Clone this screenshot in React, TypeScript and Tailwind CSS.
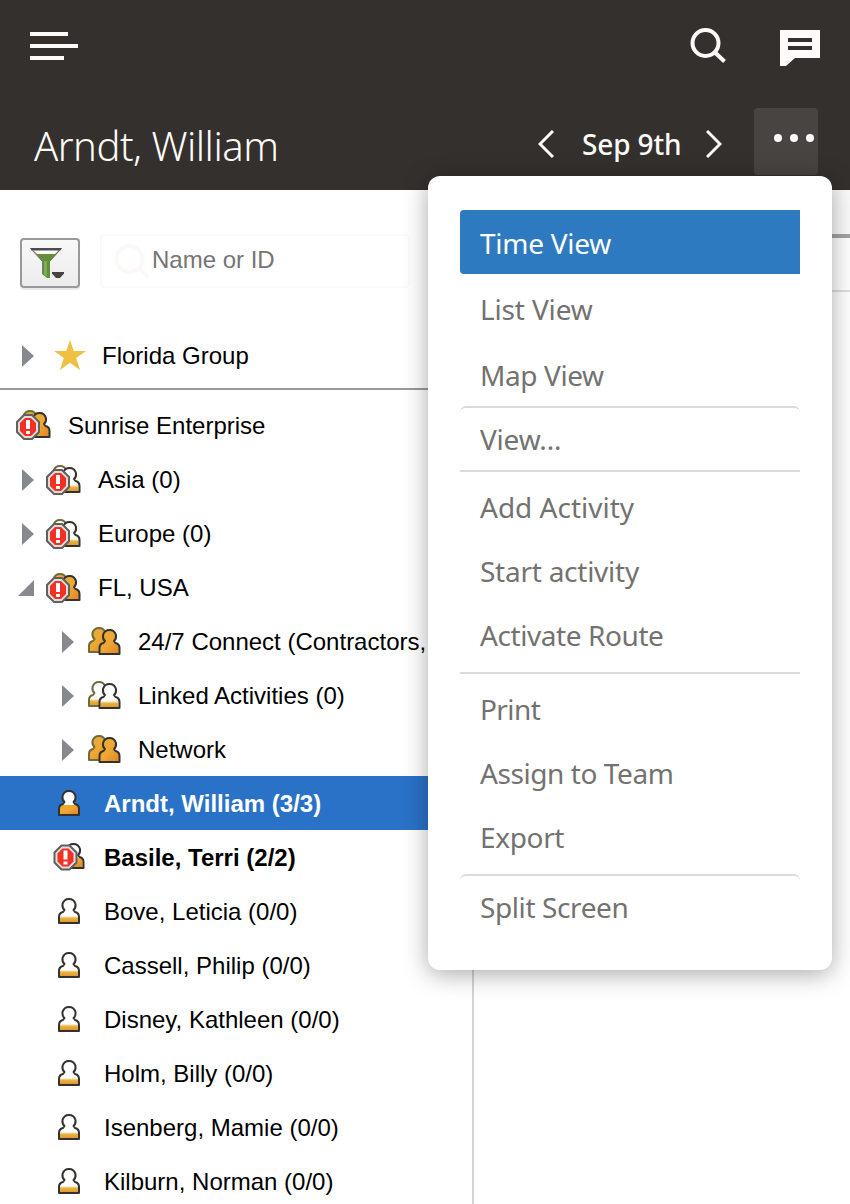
import { useState } from "react";
import clsx from "clsx";

type IconKind = "group" | "groupEmpty" | "alertGroup" | "alertGroupEmpty" | "personActive" | "person" | "alertPerson";

type TreeRow = {
    label: string;
    icon: IconKind;
    level: "root" | "region" | "team" | "person";
    arrow?: "closed" | "open";
    bold?: boolean;
};

const rows: TreeRow[] = [
    { label: "Sunrise Enterprise", icon: "alertGroup", level: "root" },
    { label: "Asia (0)", icon: "alertGroupEmpty", level: "region", arrow: "closed" },
    { label: "Europe (0)", icon: "alertGroupEmpty", level: "region", arrow: "closed" },
    { label: "FL, USA", icon: "alertGroup", level: "region", arrow: "open" },
    { label: "24/7 Connect (Contractors,", icon: "group", level: "team", arrow: "closed" },
    { label: "Linked Activities (0)", icon: "groupEmpty", level: "team", arrow: "closed" },
    { label: "Network", icon: "group", level: "team", arrow: "closed" },
    { label: "Arndt, William (3/3)", icon: "personActive", level: "person", bold: true },
    { label: "Basile, Terri (2/2)", icon: "alertPerson", level: "person", bold: true },
    { label: "Bove, Leticia (0/0)", icon: "person", level: "person" },
    { label: "Cassell, Philip (0/0)", icon: "person", level: "person" },
    { label: "Disney, Kathleen (0/0)", icon: "person", level: "person" },
    { label: "Holm, Billy (0/0)", icon: "person", level: "person" },
    { label: "Isenberg, Mamie (0/0)", icon: "person", level: "person" },
    { label: "Kilburn, Norman (0/0)", icon: "person", level: "person" }
];

// className carries the spacing and dividers between menu sections
const menuItems = [
    { label: "Time View", className: "h-16 pt-0.5 tracking-[-0.25px]" },
    { label: "List View", className: "mt-0.5 h-16 pt-0.5 tracking-[-0.15px]" },
    { label: "Map View", className: "mt-0.5 h-16 pt-0.5 tracking-[-0.4px]" },
    { label: "View...", className: "h-16 rounded-t-md border-t-2 border-[#dedadb] tracking-[-0.2px]" },
    { label: "Add Activity", className: "h-[68px] border-t-2 border-[#dedadb] pt-1" },
    { label: "Start activity", className: "h-16 pt-0.5 tracking-[-0.25px]" },
    { label: "Activate Route", className: "h-16 pt-0.5 tracking-[-0.42px]" },
    { label: "Print", className: "mt-1.5 h-[68px] border-t-2 border-[#dedadb] pt-1 tracking-[-0.6px]" },
    { label: "Assign to Team", className: "h-16 pt-0.5 tracking-[-0.42px]" },
    { label: "Export", className: "h-16 pt-0.5 tracking-[-0.35px]" },
    { label: "Split Screen", className: "mt-1.5 h-16 rounded-t-md border-t-2 border-[#dedadb] tracking-[-0.4px]" }
];

const personPath = "M6.5 12 Q4 10 4.5 6 Q6 1 11 1 Q16 1 17.5 6 Q18 10 15.5 12 L17 14 Q21 15 21 19 V25 H1 V19 Q1 15 5 14 Z";

function Person({ x, y, fill, stroke = "#33322e" }: { x: number; y: number; fill: "full" | "half" | "empty"; stroke?: string }) {
    return (
        <g transform={`translate(${x} ${y})`}>
            <path d={personPath} fill={fill === "full" ? "url(#amber)" : "#fff"} />
            {fill === "half" && <path d="M2 15 H20 V24 H2 Z" fill="url(#amber)" />}
            {fill === "empty" && <path d="M2 18 H20 V24 H2 Z" fill="url(#amberBase)" />}
            <path d={personPath} fill="none" stroke={stroke} strokeWidth="2" strokeLinejoin="round" />
        </g>
    );
}

function AlertBadge({ x, y }: { x: number; y: number }) {
    return (
        <g transform={`translate(${x} ${y})`}>
            <path d="M8 1 H16 L23 8 V18 L16 25 H8 L1 18 V8 Z" fill="#dededc" stroke="#62605e" strokeWidth="2" />
            <path d="M9 4 H15 L20 9 V17 L15 22 H9 L4 17 V9 Z" fill="#f23124" />
            <path d="M10 6 H14 V15 H10 Z M10 17 H14 V20 H10 Z" fill="#fff" />
        </g>
    );
}

function ResourceIcon({ kind }: { kind: IconKind }) {
    if (kind === "person" || kind === "personActive") {
        return (
            <svg width="22" height="27" viewBox="0 0 22 27">
                <Person x={0} y={0} fill={kind === "person" ? "empty" : "half"} />
            </svg>
        );
    }
    if (kind === "alertPerson") {
        return (
            <svg width="32" height="28" viewBox="0 0 32 28">
                <Person x={9.5} y={0} fill="half" />
                <AlertBadge x={0.5} y={1.5} />
            </svg>
        );
    }
    const fill = kind === "group" || kind === "alertGroup" ? "full" : "empty";
    if (kind === "group" || kind === "groupEmpty") {
        return (
            <svg width="33" height="28" viewBox="0 0 33 28">
                <Person x={0} y={0} fill={fill} stroke="#716a3c" />
                <Person x={10.5} y={2} fill={fill} />
            </svg>
        );
    }
    return (
        <svg width="36" height="30" viewBox="0 0 36 30">
            <Person x={3} y={0} fill={fill} stroke="#716a3c" />
            <Person x={12.5} y={2} fill={fill} />
            <AlertBadge x={0} y={4} />
        </svg>
    );
}

function Arrow({ open }: { open?: boolean }) {
    return (
        <svg className="mt-0.5" width="16" height="22" viewBox="0 0 16 22">
            <path d={open ? "M16 3 V19 H0 Z" : "M4 0 L16 11 L4 22 Z"} fill="#868a8f" />
        </svg>
    );
}

function TopBar() {
    return (
        <header className="h-[190px] shrink-0 bg-[#34302d] text-[#fcfbfa]">
            <div className="flex h-[95px] items-start pl-[30px] pr-[30px]">
                <button className="mt-8 flex flex-col gap-2" aria-label="Menu">
                    <span className="h-1 w-[38px] bg-[#fcfbfa]" />
                    <span className="h-1 w-12 bg-[#fcfbfa]" />
                    <span className="h-1 w-[34px] bg-[#fcfbfa]" />
                </button>
                <svg className="ml-auto mt-7" width="36" height="36" viewBox="0 0 36 36" fill="none" stroke="currentColor" strokeWidth="4">
                    <circle cx="15.5" cy="15" r="13" />
                    <path d="M24.5 24 L34.5 33.5" />
                </svg>
                <svg className="ml-[54px] mt-[30px]" width="40" height="36" viewBox="0 0 40 36">
                    <path d="M0 0 H40 V28 H15 L6 36 H0 Z" fill="currentColor" />
                    <path d="M8 8 H32 V12 H8 Z M8 16 H32 V20 H8 Z" fill="#34302d" />
                </svg>
            </div>
            <div className="flex h-[95px] items-start pl-[34px] pr-8">
                <h1 className="mt-[23px] w-[504px] whitespace-nowrap text-[40px] leading-[56px] font-light tracking-[-0.5px]">Arndt, William</h1>
                <svg className="mt-[35px]" width="16" height="28" viewBox="0 0 16 28" fill="none" stroke="currentColor" strokeWidth="3">
                    <path d="M15 1 L2 14 L15 27" />
                </svg>
                <span className="ml-7 mt-[29px] w-[100px] whitespace-nowrap text-[28px] leading-10 font-medium tracking-[-0.15px]">Sep 9th</span>
                <svg className="ml-6 mt-[35px]" width="16" height="28" viewBox="0 0 16 28" fill="none" stroke="currentColor" strokeWidth="3">
                    <path d="M1 1 L14 14 L1 27" />
                </svg>
                <button className="ml-auto mt-[13px] flex h-[67px] w-16 justify-end gap-2 rounded bg-[#484441] pr-1 pt-[26px]" aria-label="More">
                    <span className="size-2 rounded-full bg-[#fcfbfa]" />
                    <span className="size-2 rounded-full bg-[#fcfbfa]" />
                    <span className="size-2 rounded-full bg-[#fcfbfa]" />
                </button>
            </div>
        </header>
    );
}

function SearchRow() {
    return (
        <div className="flex h-[128px] items-start gap-5 pl-5 pt-11">
            <button className="mt-1 flex h-[50px] w-[60px] items-start rounded border-2 border-[#999] bg-linear-to-b from-[#f8f8f8] to-[#ececec] pl-2 pt-2 shadow-[0_2px_1px_#e8e8e8]" aria-label="Filter">
                <svg width="36" height="32" viewBox="0 0 36 32">
                    <path d="M2 2 H30 L20 13 V30 H17 L12 26 V13 Z" fill="#648e3c" />
                    <path d="M3 2 H29 L25 6 H7 Z" fill="#fff" />
                    <path d="M0 0 H32 L30.5 2.5 H1.5 Z" fill="#4c4d4b" />
                    <path d="M2 2 L12.5 13.5 V26" fill="none" stroke="#777" strokeWidth="1" />
                    <path d="M14 13 H17 V29 L14 26.5 Z" fill="#7fae51" />
                    <path d="M30 2 L20 13" stroke="#66753d" strokeWidth="1" />
                    <path d="M22 24 H34 V25.5 L30 30 H26 L22 25.5 Z" fill="#444" />
                </svg>
            </button>
            <div className="flex h-[54px] w-[310px] items-start rounded border-2 border-[#fafafa] pl-3">
                <svg className="mt-2" width="36" height="36" viewBox="0 0 36 36" fill="none" stroke="#fbf9f8" strokeWidth="4">
                    <circle cx="15.5" cy="15" r="13" />
                    <path d="M24.5 24 L34.5 34" />
                </svg>
                <span className="ml-0.5 mt-2 text-2xl text-[#757575]">Name or ID</span>
            </div>
        </div>
    );
}

export default function App() {
    const [view, setView] = useState("Time View");
    const [selected, setSelected] = useState("Arndt, William (3/3)");

    return (
        <div className="relative flex h-[1204px] w-[850px] flex-col overflow-hidden bg-white font-['Noto_Sans',sans-serif]">
            {/* Shared gradients for the resource icons */}
            <svg className="absolute" width="0" height="0">
                <defs>
                    <linearGradient id="amber" x1="0" y1="0" x2="1" y2="1">
                        <stop offset="0" stopColor="#e3ab38" />
                        <stop offset="0.5" stopColor="#efa833" />
                        <stop offset="1" stopColor="#e08326" />
                    </linearGradient>
                    <linearGradient id="amberBase" x1="0" y1="0" x2="0" y2="1">
                        <stop offset="0" stopColor="#fff" />
                        <stop offset="0.35" stopColor="#ecb443" />
                        <stop offset="1" stopColor="#dd9a2e" />
                    </linearGradient>
                </defs>
            </svg>

            <TopBar />

            <div className="flex min-h-0 flex-1">
                {/* Resource tree */}
                <aside className="w-[474px] shrink-0 border-r-2 border-[#d4d4d4] font-['Liberation_Sans',sans-serif] text-2xl text-black">
                    <SearchRow />
                    <div className="flex h-[72px] items-center border-b-2 border-[#999] pl-[18px] pt-1">
                        <Arrow />
                        <svg className="ml-5" width="32" height="30" viewBox="0 0 32 30">
                            <path d="M16 0 L19.8 11 H32 L22.2 18 L26 30 L16 22.8 L6 30 L9.8 18 L0 11 H12.2 Z" fill="#f0c044" />
                        </svg>
                        <span className="ml-4 mt-0.5">Florida Group</span>
                    </div>
                    <div className="pt-2">
                        {rows.map((row) => (
                            <div
                                key={row.label}
                                onClick={() => setSelected(row.label)}
                                className={clsx(
                                    "flex h-[54px] items-center whitespace-nowrap",
                                    row.level === "root" && "pl-4",
                                    row.level === "region" && "pl-[18px]",
                                    row.level === "team" && "pl-[58px]",
                                    row.level === "person" && "pl-[53px]",
                                    row.bold && "font-bold",
                                    selected === row.label && "bg-[#2a72c8] text-white"
                                )}
                            >
                                {row.arrow && <Arrow open={row.arrow === "open"} />}
                                <span
                                    className={clsx(
                                        "flex shrink-0",
                                        row.level === "root" && "w-[52px]",
                                        row.level === "region" && "ml-3 mt-0.5 w-[52px]",
                                        row.level === "team" && "ml-3.5 w-[50px]",
                                        row.level === "person" && "w-[51px]",
                                        row.level === "person" && row.icon !== "alertPerson" && "pl-[5px]"
                                    )}
                                >
                                    <ResourceIcon kind={row.icon} />
                                </span>
                                <span className="mt-0.5">{row.label}</span>
                            </div>
                        ))}
                    </div>
                </aside>

                {/* Schedule area */}
                <main className="flex-1">
                    <div className="h-12 border-b-4 border-[#a3a3a3] bg-[#fafafa]" />
                    <div className="h-[54px] border-b-2 border-[#dedede]" />
                </main>
            </div>

            {/* Actions menu */}
            <div className="absolute left-[428px] top-[176px] flex h-[794px] w-[404px] flex-col rounded-xl bg-white px-8 pt-[34px] shadow-[0_4px_24px_rgba(0,0,0,0.34)]">
                {menuItems.map((item) => (
                    <button
                        key={item.label}
                        onClick={() => setView(item.label)}
                        className={clsx(
                            "flex shrink-0 items-center whitespace-nowrap pl-5 text-left text-[28px]",
                            view === item.label ? "rounded-l bg-[#2e7ac1] text-white" : "text-[#737270]",
                            item.className
                        )}
                    >
                        {item.label}
                    </button>
                ))}
            </div>
        </div>
    );
}
